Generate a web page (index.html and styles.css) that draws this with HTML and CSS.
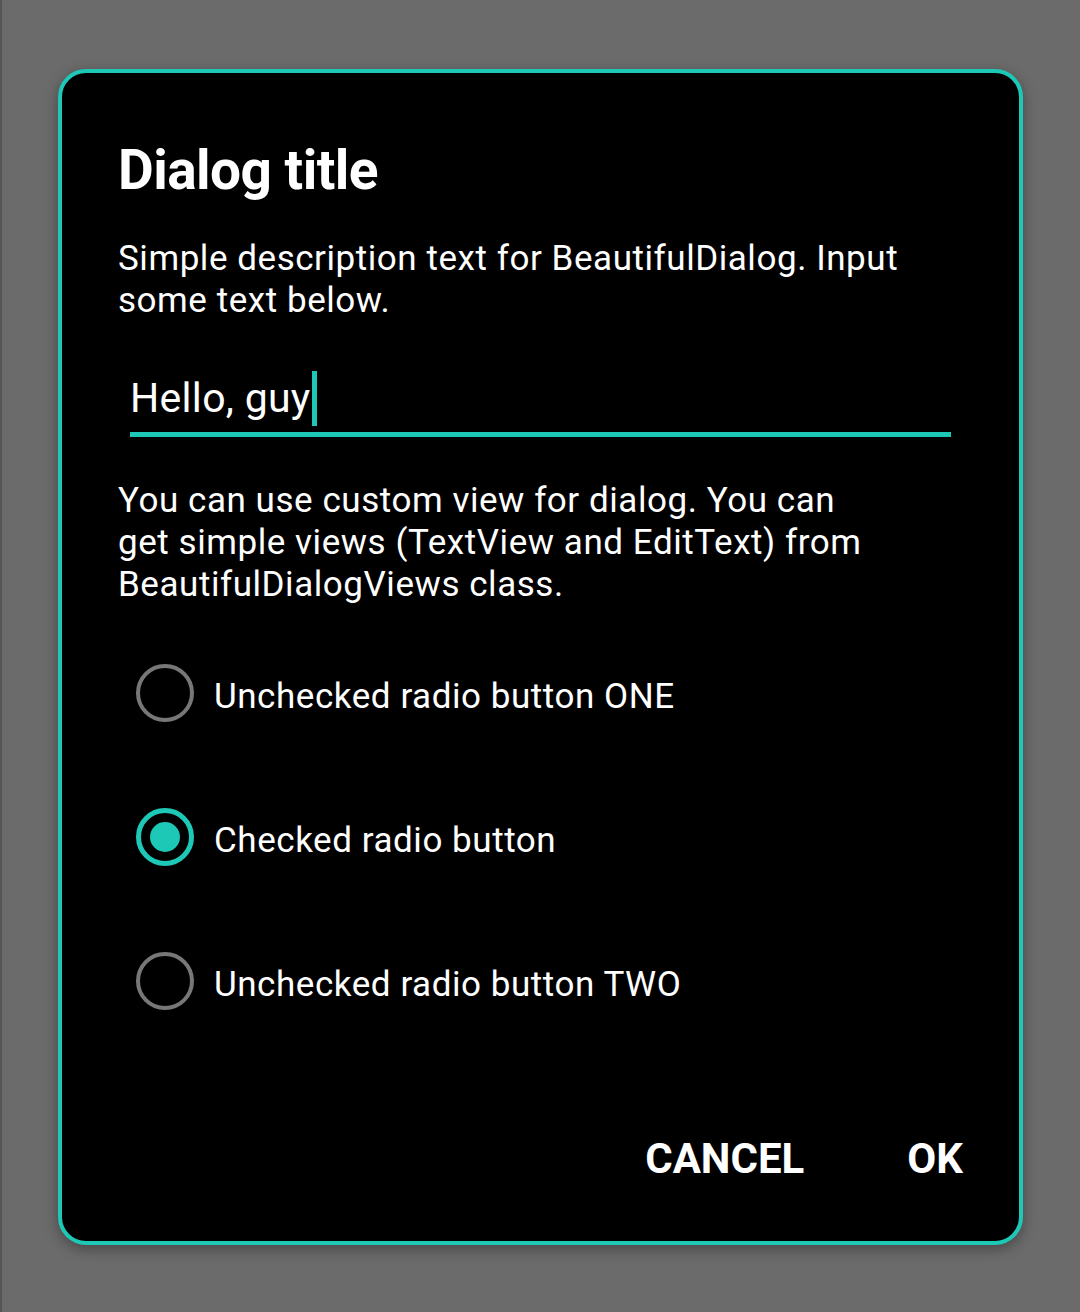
FILE: index.html
```html
<!DOCTYPE html>
<html>
<head>
<meta charset="utf-8">
<link rel="stylesheet" href="styles.css">
</head>
<body>
<div class="screen">
  <div class="dialog">
    <h1 class="title">Dialog title</h1>
    <p class="desc">Simple description text for BeautifulDialog. Input some text below.</p>
    <div class="input">
      <div class="input-text">Hello, guy<span class="cursor"></span></div>
      <div class="underline"></div>
    </div>
    <p class="body">You can use custom view for dialog. You can get simple views (TextView and EditText) from BeautifulDialogViews class.</p>
    <div class="radios">
      <div class="radio-row"><span class="radio"></span><span class="label">Unchecked radio button ONE</span></div>
      <div class="radio-row"><span class="radio checked"><span class="dot"></span></span><span class="label">Checked radio button</span></div>
      <div class="radio-row"><span class="radio"></span><span class="label">Unchecked radio button TWO</span></div>
    </div>
    <div class="actions">
      <span class="btn">CANCEL</span>
      <span class="btn">OK</span>
    </div>
  </div>
</div>
</body>
</html>
```

FILE: styles.css
```css
* { box-sizing: border-box; }
html, body {
  margin: 0;
  padding: 0;
  background: #6b6b6b;
}
body {
  width: 1080px;
  height: 1312px;
  font-family: Roboto, "Liberation Sans", sans-serif;
  color: #fff;
  overflow: hidden;
}
.screen {
  width: 1080px;
  height: 1312px;
  padding: 69px 57px 0 58px;
  border-left: 2px solid #555;
}
.dialog {
  width: 965px;
  height: 1176px;
  margin-left: -2px;
  background: #000;
  border: 4px solid #1dc8b6;
  border-radius: 28px;
  box-shadow: 0 4px 14px rgba(0, 0, 0, 0.35);
  padding: 65px 56px 0 56px;
  display: flex;
  flex-direction: column;
}
.title {
  margin: 0;
  font-size: 55px;
  line-height: 64px;
  font-weight: 700;
  letter-spacing: -0.55px;
}
.desc, .body {
  margin: 36px 0 0 0;
  font-size: 35px;
  line-height: 42px;
  font-weight: 400;
  letter-spacing: 0.55px;
  width: 810px;
}
.input {
  margin: 48px 0 0 12px;
  width: 821px;
}
.input-text {
  font-size: 41px;
  line-height: 56px;
  letter-spacing: 0.3px;
  display: flex;
  align-items: center;
}
.cursor {
  display: inline-block;
  width: 5px;
  height: 55px;
  background: #1dc8b6;
  margin-left: 1px;
}
.underline {
  margin-top: 6px;
  height: 5px;
  background: #1dc8b6;
}
.body {
  margin-top: 43px;
  width: 765px;
}
.radios {
  margin-top: 15px;
  display: flex;
  flex-direction: column;
}
.radio-row {
  height: 144px;
  display: flex;
  align-items: center;
  padding-left: 18px;
  gap: 20px;
}
.radio {
  width: 58px;
  height: 58px;
  border-radius: 50%;
  border: 4.5px solid #777;
  display: flex;
  align-items: center;
  justify-content: center;
  flex: none;
}
.radio.checked {
  border: 5px solid #1dc8b6;
}
.dot {
  width: 30px;
  height: 30px;
  border-radius: 50%;
  background: #1dc8b6;
}
.label {
  font-size: 35px;
  line-height: 42px;
  letter-spacing: 0.55px;
  padding-top: 8px;
}
.actions {
  margin-top: 78px;
  display: flex;
  justify-content: flex-end;
  gap: 103px;
}
.btn {
  font-size: 42px;
  line-height: 56px;
  font-weight: 700;
}
```
